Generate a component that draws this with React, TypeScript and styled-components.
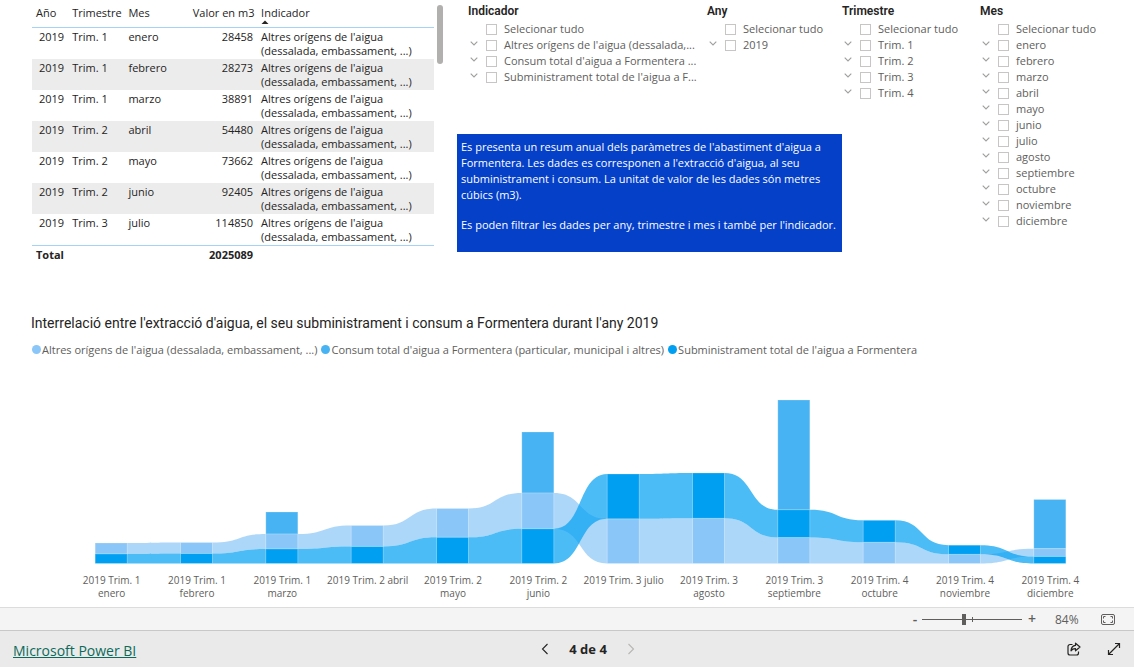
import React from "react";
import styled, { createGlobalStyle } from "styled-components";

const SANS = `"Open Sans", "Noto Sans", "Liberation Sans", sans-serif`;
const DIN = `Roboto, "Liberation Sans", sans-serif`;

const GlobalStyle = createGlobalStyle`
  *, *::before, *::after { box-sizing: border-box; }
  body { margin: 0; background: #fff; font-family: ${SANS}; font-size: 11px; color: #252423; }
  button { font: inherit; color: inherit; border: 0; background: none; padding: 0; cursor: pointer; }
`;

const Page = styled.div`
  display: flex;
  flex-direction: column;
  min-height: 100vh;
`;

const Report = styled.main`
  flex: 1;
`;

const TopRow = styled.section`
  display: grid;
  grid-template-columns: 425fr 677fr;
  align-items: start;
  padding-left: 32px;
`;

/* ---------- Data table ---------- */

const TablePane = styled.div`
  display: grid;
  grid-template-columns: minmax(0, 1fr) 6px;
  align-items: start;
  gap: 3px;
  padding-right: 14px;
`;

const DataTable = styled.table`
  width: 100%;
  table-layout: fixed;
  border-collapse: collapse;
  line-height: 14px;
`;

const HeadCell = styled.th<{ $right?: boolean; $width?: number }>`
  width: ${(p) => (p.$width ? `${p.$width}%` : "auto")};
  height: 27px;
  padding: 6px 4px 0;
  font-weight: 400;
  text-align: ${(p) => (p.$right ? "right" : "left")};
  vertical-align: top;
  white-space: nowrap;
  border-bottom: 1px solid #a6d2f5;
`;

const SortMark = styled.svg`
  display: block;
`;

const BodyRow = styled.tr`
  &:nth-child(even) {
    background: #ececec;
  }
`;

const Cell = styled.td<{ $right?: boolean }>`
  height: 31px;
  padding: 2px 4px 1px;
  vertical-align: top;
  text-align: ${(p) => (p.$right ? "right" : "left")};
  white-space: nowrap;
`;

const TotalCell = styled.td<{ $right?: boolean }>`
  padding: 2px 4px 0;
  font-weight: 700;
  text-align: ${(p) => (p.$right ? "right" : "left")};
  border-top: 1px solid #a6d2f5;
`;

const ScrollThumb = styled.div`
  height: 59px;
  margin-top: 5px;
  border-radius: 3px;
  background: #b1b0ae;
`;

/* ---------- Filters ---------- */

const Filters = styled.div`
  display: grid;
  grid-template-columns: 250fr 135fr 138fr 154fr;
  grid-template-rows: minmax(134px, auto) auto;
`;

const FilterGroup = styled.fieldset<{ $inset?: boolean; $tall?: boolean }>`
  min-width: 0;
  margin: 0;
  padding: 4px 0 0 ${(p) => (p.$inset ? 11 : 0)}px;
  border: 0;
  grid-row: ${(p) => (p.$tall ? "1 / span 2" : "1")};
`;

const FilterTitle = styled.legend`
  float: left;
  width: 100%;
  padding: 0;
  margin-bottom: 2px;
  font: 600 12px/15px ${DIN};
`;

const FilterRow = styled.div`
  clear: both;
  display: flex;
  align-items: center;
  height: 16px;
`;

const Expander = styled.button`
  display: flex;
  width: 18px;
  padding: 0 0 3px 2px;
`;

const ExpanderSpace = styled.span`
  width: 18px;
`;

const Option = styled.label`
  display: flex;
  align-items: center;
  gap: 7px;
  color: #605e5c;
  line-height: 16px;
  white-space: nowrap;
`;

const Tick = styled.input`
  appearance: none;
  width: 11px;
  height: 11px;
  margin: 0;
  border: 1px solid #c8c6c4;
  background: #fff;
`;

const Note = styled.div`
  grid-column: 1 / span 2;
  grid-row: 2;
  min-height: 118px;
  padding: 5px 4px;
  background: #0540c9;
  color: #fff;
  line-height: 16px;
`;

const NoteText = styled.p`
  margin: 0 0 14px;
`;

/* ---------- Chart ---------- */

const ChartSection = styled.section`
  padding-top: 51px;
`;

const ChartTitle = styled.h2`
  margin: 0 0 9px 31px;
  font: 400 14px/20px ${DIN};
`;

const Legend = styled.ul`
  display: flex;
  gap: 4px;
  margin: 0 0 36px 32px;
  padding: 0;
  list-style: none;
  line-height: 16px;
  color: #605e5c;
`;

const LegendItem = styled.li<{ $color: string }>`
  display: flex;
  align-items: center;
  gap: 1px;
  &::before {
    content: "";
    width: 9px;
    height: 9px;
    border-radius: 50%;
    background: ${(p) => p.$color};
  }
`;

const Plot = styled.div`
  margin: 0 41px 0 69px;
`;

const RibbonSvg = styled.svg`
  display: block;
  width: 100%;
  height: 170px;
`;

const AxisLabels = styled.div`
  display: grid;
  grid-template-columns: repeat(12, 1fr);
  padding: 10px 0 5px;
  font-size: 10px;
  line-height: 13px;
  text-align: center;
  white-space: pre-line;
  color: #605e5c;
`;

/* ---------- Bottom bars ---------- */

const ZoomBar = styled.div`
  display: flex;
  align-items: center;
  justify-content: flex-end;
  height: 23px;
  padding-right: 19px;
  border-top: 1px solid #dcdcdc;
  background: #f4f4f4;
  color: #605e5c;
`;

const ZoomStep = styled.button`
  width: 14px;
  font-size: 14px;
  font-weight: 600;
  line-height: 16px;
`;

const ZoomRange = styled.input`
  appearance: none;
  width: 100px;
  height: 12px;
  margin: 0 3px 0 0;
  background:
    linear-gradient(#605e5c, #605e5c) 50px 50% / 1px 5px no-repeat,
    linear-gradient(#605e5c, #605e5c) 0 50% / 100% 1px no-repeat;
  &::-webkit-slider-thumb {
    appearance: none;
    width: 4px;
    height: 11px;
    background: #605e5c;
  }
`;

const ZoomValue = styled.output`
  width: 62px;
  padding-left: 16px;
  font-size: 12px;
`;

const IconButton = styled.button`
  display: flex;
`;

const Footer = styled.footer`
  display: grid;
  grid-template-columns: 526fr auto 484fr;
  align-items: center;
  height: 37px;
  padding: 0 13px;
  border-top: 1px solid #c8c8c8;
  background: #eaeaea;
`;

const BrandLink = styled.a`
  justify-self: start;
  padding-top: 3px;
  color: #0b6a5b;
  font-size: 14px;
  line-height: 20px;
`;

const Pager = styled.nav`
  display: flex;
  align-items: center;
  gap: 20px;
`;

const PageCount = styled.span`
  font-size: 13px;
  font-weight: 700;
  color: #252423;
`;

const Actions = styled.div`
  display: flex;
  justify-content: flex-end;
  gap: 26px;
`;

/* ---------- Data ---------- */

const rows = [
  ["2019", "Trim. 1", "enero", "28458"],
  ["2019", "Trim. 1", "febrero", "28273"],
  ["2019", "Trim. 1", "marzo", "38891"],
  ["2019", "Trim. 2", "abril", "54480"],
  ["2019", "Trim. 2", "mayo", "73662"],
  ["2019", "Trim. 2", "junio", "92405"],
  ["2019", "Trim. 3", "julio", "114850"],
];

const filters = [
  {
    title: "Indicador",
    options: [
      "Altres orígens de l'aigua (dessalada,...",
      "Consum total d'aigua a Formentera ...",
      "Subministrament total de l'aigua a F...",
    ],
  },
  { title: "Any", options: ["2019"] },
  { title: "Trimestre", options: ["Trim. 1", "Trim. 2", "Trim. 3", "Trim. 4"] },
  {
    title: "Mes",
    options: [
      "enero", "febrero", "marzo", "abril", "mayo", "junio",
      "julio", "agosto", "septiembre", "octubre", "noviembre", "diciembre",
    ],
  },
];

const LIGHT = "#8ac6f7";
const MID = "#47b3f3";
const DARK = "#009ff2";

type Span = [number, number];
interface Month {
  label: string;
  light: Span;
  dark: Span;
  mid?: Span;
}

// Spans are [top, bottom] in chart units; the base line is at 169.5.
const months: Month[] = [
  { label: "2019 Trim. 1\nenero", light: [149, 160], dark: [160, 169.5] },
  { label: "2019 Trim. 1\nfebrero", light: [148.5, 159.5], dark: [159.5, 169.5] },
  { label: "2019 Trim. 1\nmarzo", light: [140, 155], dark: [155, 169.5], mid: [118, 140] },
  { label: "2019 Trim. 2 abril", light: [131.5, 152.5], dark: [152.5, 169.5] },
  { label: "2019 Trim. 2\nmayo", light: [114.5, 143.3], dark: [143.3, 169.5] },
  { label: "2019 Trim. 2\njunio", light: [99, 134.8], dark: [134.8, 169.5], mid: [38, 99] },
  { label: "2019 Trim. 3 julio", light: [124.8, 169.5], dark: [80, 124.8] },
  { label: "2019 Trim. 3\nagosto", light: [124.3, 169.5], dark: [79, 124.3] },
  { label: "2019 Trim. 3\nseptiembre", light: [143.5, 169.5], dark: [115.8, 143.5], mid: [6, 115.8] },
  { label: "2019 Trim. 4\noctubre", light: [148.2, 169.5], dark: [126.3, 148.2] },
  { label: "2019 Trim. 4\nnoviembre", light: [160.3, 169.5], dark: [151.2, 160.3] },
  { label: "2019 Trim. 4\ndiciembre", light: [154.7, 162.5], dark: [162.5, 169.5], mid: [105.5, 154.7] },
];

const PITCH = 1024 / 12;
const HALF = 16;
const center = (i: number) => PITCH * (i + 0.5) - 0.5;

function ribbon(i: number, a: Span, b: Span) {
  const x0 = center(i) + HALF;
  const x1 = center(i + 1) - HALF;
  const c0 = x0 + (x1 - x0) * 0.55;
  const c1 = x0 + (x1 - x0) * 0.45;
  return `M${x0} ${a[0]}C${c0} ${a[0]} ${c1} ${b[0]} ${x1} ${b[0]}V${b[1]}C${c1} ${b[1]} ${c0} ${a[1]} ${x0} ${a[1]}Z`;
}

function Bar({ i, span, color }: { i: number; span: Span; color: string }) {
  return (
    <rect
      x={center(i) - HALF}
      y={span[0]}
      width={HALF * 2}
      height={span[1] - span[0]}
      fill={color}
      stroke="#fff"
      strokeOpacity={0.2}
    />
  );
}

function RibbonChart() {
  return (
    <RibbonSvg viewBox="0 0 1024 170" preserveAspectRatio="none" role="img" aria-label="Valor en m3 per mes">
      {months.slice(0, -1).map((m, i) => (
        <g key={m.label} fillOpacity={0.7}>
          <path d={ribbon(i, m.light, months[i + 1].light)} fill={LIGHT} />
          <path d={ribbon(i, m.dark, months[i + 1].dark)} fill={DARK} />
        </g>
      ))}
      {months.map((m, i) => (
        <g key={m.label}>
          {m.mid && <Bar i={i} span={m.mid} color={MID} />}
          <Bar i={i} span={m.light} color={LIGHT} />
          <Bar i={i} span={m.dark} color={DARK} />
        </g>
      ))}
    </RibbonSvg>
  );
}

function FilterList({ title, options }: { title: string; options: string[] }) {
  return (
    <FilterGroup $inset={title === "Indicador"} $tall={title === "Mes"}>
      <FilterTitle>{title}</FilterTitle>
      <FilterRow>
        <ExpanderSpace />
        <Option>
          <Tick type="checkbox" />
          Selecionar tudo
        </Option>
      </FilterRow>
      {options.map((o) => (
        <FilterRow key={o}>
          <Expander type="button" aria-label={`Expandir ${o}`}>
            <svg width="8" height="5" viewBox="0 0 8 5" fill="none" stroke="#a19f9d" strokeWidth="1.1">
              <path d="M0.7 0.7 4 4 7.3 0.7" />
            </svg>
          </Expander>
          <Option>
            <Tick type="checkbox" />
            {o}
          </Option>
        </FilterRow>
      ))}
    </FilterGroup>
  );
}

export default function App() {
  return (
    <Page>
      <GlobalStyle />
      <Report>
        <TopRow>
          <TablePane>
            <DataTable>
              <thead>
                <tr>
                  <HeadCell $width={9}>Año</HeadCell>
                  <HeadCell $width={14}>Trimestre</HeadCell>
                  <HeadCell $width={16}>Mes</HeadCell>
                  <HeadCell $right $width={17}>
                    Valor en m3
                  </HeadCell>
                  <HeadCell>
                    Indicador
                    <SortMark width="8" height="4" viewBox="0 0 8 4">
                      <path d="M0.5 4 4 0.5 7.5 4Z" fill="#252423" />
                    </SortMark>
                  </HeadCell>
                </tr>
              </thead>
              <tbody>
                {rows.map(([year, quarter, month, value]) => (
                  <BodyRow key={month}>
                    <Cell $right>{year}</Cell>
                    <Cell>{quarter}</Cell>
                    <Cell>{month}</Cell>
                    <Cell $right>{value}</Cell>
                    <Cell>
                      Altres orígens de l'aigua
                      <br />
                      (dessalada, embassament, ...)
                    </Cell>
                  </BodyRow>
                ))}
              </tbody>
              <tfoot>
                <tr>
                  <TotalCell colSpan={3}>Total</TotalCell>
                  <TotalCell $right>2025089</TotalCell>
                  <TotalCell />
                </tr>
              </tfoot>
            </DataTable>
            <ScrollThumb />
          </TablePane>
          <Filters>
            {filters.map((f) => (
              <FilterList key={f.title} {...f} />
            ))}
            <Note>
              <NoteText>
                Es presenta un resum anual dels paràmetres de l'abastiment d'aigua a Formentera. Les dades es
                corresponen a l'extracció d'aigua, al seu subministrament i consum. La unitat de valor de les dades
                són metres cúbics (m3).
              </NoteText>
              <NoteText>Es poden filtrar les dades per any, trimestre i mes i també per l'indicador.</NoteText>
            </Note>
          </Filters>
        </TopRow>

        <ChartSection>
          <ChartTitle>
            Interrelació entre l'extracció d'aigua, el seu subministrament i consum a Formentera durant l'any 2019
          </ChartTitle>
          <Legend>
            <LegendItem $color={LIGHT}>Altres orígens de l'aigua (dessalada, embassament, ...)</LegendItem>
            <LegendItem $color={MID}>Consum total d'aigua a Formentera (particular, municipal i altres)</LegendItem>
            <LegendItem $color={DARK}>Subministrament total de l'aigua a Formentera</LegendItem>
          </Legend>
          <Plot>
            <RibbonChart />
            <AxisLabels>
              {months.map((m) => (
                <span key={m.label}>{m.label}</span>
              ))}
            </AxisLabels>
          </Plot>
        </ChartSection>
      </Report>

      <ZoomBar>
        <ZoomStep type="button">-</ZoomStep>
        <ZoomRange type="range" min="0" max="100" defaultValue="42" aria-label="Zoom" />
        <ZoomStep type="button">+</ZoomStep>
        <ZoomValue>84%</ZoomValue>
        <IconButton type="button" aria-label="Ajustar a la página">
          <svg width="14" height="11" viewBox="0 0 14 11" fill="none" stroke="#605e5c">
            <rect x="0.5" y="0.5" width="13" height="10" rx="1.5" />
            <path d="M2.5 4.5v-2h2M9.5 2.5h2v2M11.5 6.5v2h-2M4.5 8.5h-2v-2" />
          </svg>
        </IconButton>
      </ZoomBar>
      <Footer>
        <BrandLink href="#">Microsoft Power BI</BrandLink>
        <Pager>
          <IconButton type="button" aria-label="Página anterior">
            <svg width="8" height="12" viewBox="0 0 8 12" fill="none" stroke="#252423" strokeWidth="1.1">
              <path d="M6.5 1 1.5 6l5 5" />
            </svg>
          </IconButton>
          <PageCount>4 de 4</PageCount>
          <IconButton type="button" aria-label="Página siguiente">
            <svg width="8" height="12" viewBox="0 0 8 12" fill="none" stroke="#b8b6b4" strokeWidth="1.1">
              <path d="M1.5 1l5 5-5 5" />
            </svg>
          </IconButton>
        </Pager>
        <Actions>
          <IconButton type="button" aria-label="Compartir">
            <svg width="14" height="14" viewBox="0 0 14 14" fill="none" stroke="#252423" strokeWidth="1.2" strokeLinejoin="round">
              <path d="M5.5 2.5H3A2 2 0 0 0 1 4.500V11a2 2 0 0 0 2 2h6.500a2 2 0 0 0 2-2V9.500" />
              <path d="M8.500 1.200 13 5 8.500 8.800V6.700C6.500 6.600 5 7.400 4 8.800 4.200 5.800 5.800 3.700 8.500 3.400Z" />
            </svg>
          </IconButton>
          <IconButton type="button" aria-label="Pantalla completa">
            <svg width="14" height="14" viewBox="0 0 14 14" fill="none" stroke="#252423" strokeWidth="1.2">
              <path d="M1.500 12.500 12.500 1.500M8 1.500h4.500V6M1.500 8v4.500H6" />
            </svg>
          </IconButton>
        </Actions>
      </Footer>
    </Page>
  );
}
